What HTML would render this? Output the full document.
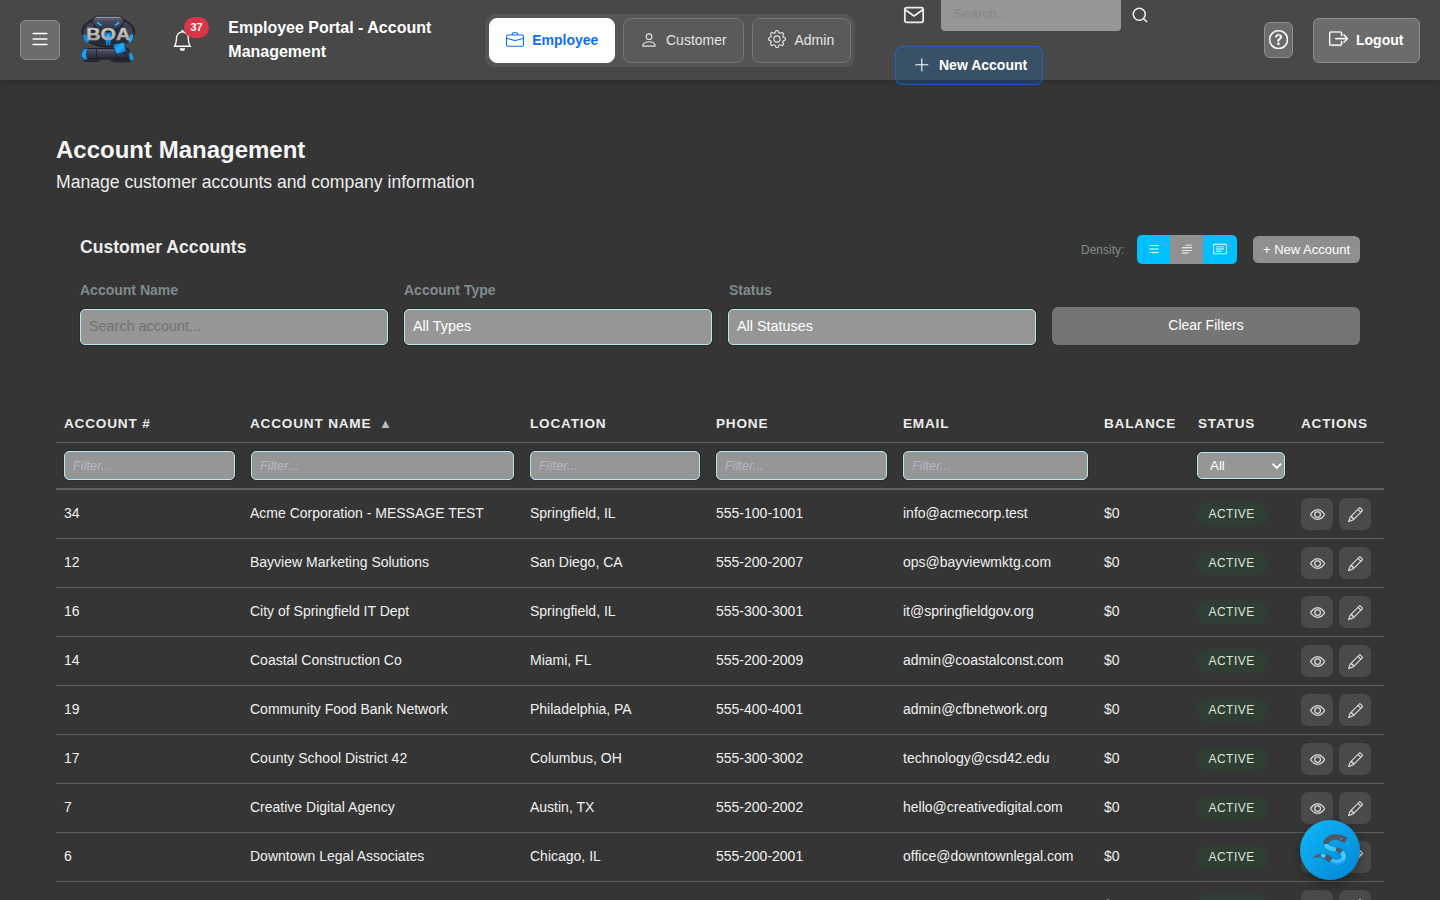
<!DOCTYPE html>
<html lang="en">
<head>
<meta charset="utf-8">
<title>Employee Portal - Account Management</title>
<style>
*{box-sizing:border-box;margin:0;padding:0}
html,body{width:1440px;height:900px;overflow:hidden;background:#353535;font-family:"Liberation Sans",Arial,sans-serif;color:#fff}
body{position:relative}
svg{display:block}
#hdr{position:absolute;left:0;top:0;width:1440px;height:80px;background:#484848;box-shadow:0 1px 5px rgba(0,0,0,.22)}
.hbtn{position:absolute;background:#6c6c6c;border:1px solid #8e8e8e;border-radius:6px;color:#fff}
#menu{left:20px;top:20px;width:40px;height:40px}
#title{position:absolute;left:228.3px;top:16px;width:240px;font-size:16px;line-height:24px;font-weight:bold;color:#fff}
#switch{position:absolute;left:485px;top:14px;width:370px;height:53px;background:#555;border-radius:10px}
.sw{position:absolute;top:4px;height:45px;border-radius:8px;font-size:14px;line-height:16px;color:#e4e4e4;background:#5a5a5a;border:1px solid #767676}
.sw span{position:absolute;top:13px;white-space:nowrap}
.sw.on{background:#fff;border-color:#fff;color:#0d6efd;font-weight:bold}
#srch{position:absolute;left:941px;top:-4px;width:180px;height:35px;background:#969696;border-radius:4px;font-size:13.6px;color:#87878c;padding:10.3px 12px 0 12.5px;line-height:16px}
#newacc{position:absolute;left:895px;top:46px;width:148px;height:39px;border:1px solid rgba(13,110,253,.6);border-radius:7px;background:rgba(0,120,230,.2);font-size:14px;font-weight:bold;line-height:16px;color:#fff}
#newacc span{position:absolute;left:43px;top:10px;white-space:nowrap}
#help{left:1264px;top:22px;width:29px;height:36px}
#logout{left:1313px;top:18px;width:107px;height:45px;font-size:14px;font-weight:bold;line-height:16px}
#logout span{position:absolute;left:42px;top:13px}
#badge{position:absolute;left:184px;top:17px;width:25px;height:21px;border-radius:10.5px;background:#dc3545;font-size:11px;font-weight:bold;line-height:20px;text-align:center;color:#fff}
h1{position:absolute;left:56px;top:134px;font-size:24px;line-height:32px;font-weight:bold;color:#f6f6f6;white-space:nowrap}
#sub{position:absolute;left:56px;top:170px;font-size:17.6px;line-height:24px;color:#ececec;white-space:nowrap}
h2{position:absolute;left:80px;top:235px;font-size:17.6px;line-height:24px;font-weight:bold;color:#ececec;white-space:nowrap}
#dens{position:absolute;left:1081px;top:243px;font-size:12px;line-height:14px;color:#7f8c8d}
#dgrp{position:absolute;left:1137px;top:235px;width:100px;height:29px;border-radius:5px;overflow:hidden;background:#00bfff}
#dgrp i{position:absolute;top:0;height:29px;display:block}
#na2{position:absolute;left:1253px;top:236px;width:107px;height:27px;border-radius:5.5px;background:#8f8f8f;font-size:13px;line-height:27px;text-align:center;color:#fff}
.lbl{position:absolute;top:282px;font-size:14px;line-height:16px;font-weight:bold;color:#7f8c8d}
.inp{position:absolute;top:309px;height:36px;width:308px;background:#969696;border:1px solid #b6ecf1;border-radius:5px;font-size:14.4px;line-height:32px;padding-left:8px;color:#fff;box-shadow:0 0 0 1px rgba(30,20,20,.35)}
#clr{position:absolute;left:1052px;top:307px;width:308px;height:38px;background:#757575;border-radius:6px;font-size:14px;line-height:36px;text-align:center;color:#fff}
.th{position:absolute;top:415.7px;font-size:13.6px;line-height:15px;font-weight:bold;letter-spacing:.8px;color:#ececec;white-space:nowrap}
.hl{position:absolute;left:56px;width:1328px;background:#5e5e5e}
.f{position:absolute;top:451px;height:28.5px;background:#969696;border:1px solid #b6ecf1;border-radius:5px;font-size:12.8px;font-style:italic;line-height:27px;padding-left:8px;color:#b2bac6;box-shadow:0 0 0 1px rgba(30,20,20,.35)}
.row{position:absolute;left:56px;width:1328px;height:49px;border-bottom:1px solid #5c5c5c;font-size:14px;line-height:46px;color:#f0f0f0;white-space:nowrap}
.row span{position:absolute;top:0}
.row .st{left:1141px;top:12px;width:70px;height:23.6px;border-radius:12px;background:#2f3e33;color:#d9e6da;font-size:12px;letter-spacing:.5px;line-height:25px;text-align:center;padding-right:.8px}
.row .ab{top:8px;width:32px;height:32px;border-radius:7px;background:#4a4a4a}
#fab{position:absolute;left:1300px;top:820px;width:60px;height:60px;border-radius:30px;background:linear-gradient(135deg,#10b8f8,#0284d4);box-shadow:0 4px 12px rgba(0,0,0,.35)}
</style>
</head>
<body>
<div id="hdr"></div>
<div class="hbtn" id="menu"><svg viewBox="0 0 16 16" width="22" height="22" fill="#fff" style="position:absolute;left:8px;top:7px"><path fill-rule="evenodd" d="M2.500 12a.5.5 0 0 1 .5-.5h10a.5.5 0 0 1 0 1H3a.5.5 0 0 1-.5-.5m0-4a.5.5 0 0 1 .5-.5h10a.5.5 0 0 1 0 1H3a.5.5 0 0 1-.5-.5m0-4a.5.5 0 0 1 .5-.5h10a.5.5 0 0 1 0 1H3a.5.5 0 0 1-.5-.5"/></svg></div>
<svg id="logo" viewBox="0 0 60 54" width="60" height="54" style="position:absolute;left:78px;top:12px">
<defs>
<linearGradient id="lgS" x1="0" y1="0" x2="0" y2="1"><stop offset="0" stop-color="#dddcd8"/><stop offset=".55" stop-color="#bcbab6"/><stop offset="1" stop-color="#8e8c89"/></linearGradient>
<linearGradient id="lgB" x1="0" y1="0" x2="1" y2="1"><stop offset="0" stop-color="#0b6fd0"/><stop offset=".5" stop-color="#22b0ff"/><stop offset="1" stop-color="#0a63c0"/></linearGradient>
<linearGradient id="lgD" x1="0" y1="0" x2="0" y2="1"><stop offset="0" stop-color="#555869"/><stop offset=".5" stop-color="#3a3d4b"/><stop offset="1" stop-color="#23252f"/></linearGradient>
<linearGradient id="lgH" x1="0" y1="0" x2="0" y2="1"><stop offset="0" stop-color="#6b6e7d"/><stop offset=".35" stop-color="#444757"/><stop offset="1" stop-color="#2a2c38"/></linearGradient>
</defs>
<ellipse cx="14" cy="48.600" rx="8.500" ry="1.700" fill="#1e2029" opacity=".85"/>
<ellipse cx="43" cy="48.800" rx="11" ry="1.700" fill="#1e2029" opacity=".85"/>
<ellipse cx="30.200" cy="19.800" rx="26.300" ry="15.300" fill="#2a2c38" stroke="#171820" stroke-width="1"/>
<path d="M6 24c-1.500-7 3-13 10-15.500l3 4c-5 2-8 6-7.500 11.500z" fill="#3e4151"/>
<path d="M54.500 24c1.500-7-3-13-10-15.500l-3 4c5 2 8 6 7.500 11.500z" fill="#3e4151"/>
<path d="M4.800 22.500l4 .5c.3 3 1.200 4.800 2.500 6.300l-3 1.600c-2-2.200-3.200-5-3.500-8.400z" fill="#1589e6"/>
<path d="M55.500 22l-3.600 1c-.2 2.800-.9 4.600-2 6.300l2.800 1.200c1.700-2.300 2.600-5 2.800-8.500z" fill="#19a4f4"/>
<path d="M17.200 4.300h25.600l3.700 5.200-5.500 7.300-10.800 3.200-10.800-3.200-5.500-7.300z" fill="url(#lgH)" stroke="#191a22" stroke-width=".9" stroke-linejoin="round"/>
<path d="M18.500 5.400h23" stroke="#8d90a0" stroke-width="1.100" stroke-linecap="round"/>
<path d="M19.600 9.400l4.600 3.600-1.600 1-3.800-2.700z" fill="#23b4ff"/>
<path d="M40.800 9.400l-4.600 3.600 1.600 1 3.800-2.700z" fill="#23b4ff"/>
<path d="M14 15c4 4 9 6 16.200 6s12.200-2 16.200-6l1 4c-3 6-9 12-17.200 12S16 25 13 19z" fill="#262833"/>
<path d="M27.200 20.500h6v6.500l-1.200 6.500h-1l-.8-4-.8 4h-1l-1.200-6.500z" fill="#0d84e6"/>
<path d="M28.600 22.500h3.200v3.500h-3.200z" fill="#35b8ff"/>
<text x="30.200" y="28.200" text-anchor="middle" font-family="Liberation Sans, Arial, sans-serif" font-weight="bold" font-size="16.800" textLength="44" lengthAdjust="spacingAndGlyphs" fill="url(#lgS)" stroke="#a9a7a3" stroke-width=".55">BOA</text>
<path d="M9 36.500h40c3.500 0 3.500 10.500 0 10.500H9c-5 0-5-10.500 0-10.500z" fill="url(#lgD)" stroke="#191a22" stroke-width=".9"/>
<path d="M9 36.500c-5 0-7 4.500-4.500 9.500l4 2.300 1.500-1.300c-2.500-3-2.500-7 0-10.500z" fill="url(#lgB)" stroke="#0d2a4a" stroke-width=".5"/>
<path d="M18.500 36.800v10M38 36.800v10" stroke="#1c1d26" stroke-width=".9"/>
<path d="M19 38.300h18.500" stroke="#5e6172" stroke-width="1.200" opacity=".8"/>
<path d="M44 33c4 2 8 6 11.500 13.500l-4.500 1.700c-3-6-6-9-10.500-11z" fill="#30323f" stroke="#191a22" stroke-width=".8"/>
<path d="M34.800 32.600l11.200-2.400 2.200 9.200-9.600 2.800z" fill="url(#lgB)" stroke="#0d2a4a" stroke-width=".5"/>
<path d="M50.800 40.600l3.400 1.200 1.600 5.800-3.600.8z" fill="#1b9cf0"/>
</svg>

<svg viewBox="0 0 16 16" width="20.8" height="20.8" fill="#fff" style="position:absolute;left:172.1px;top:29.6px;overflow:visible"><path d="M8 16a2 2 0 0 0 2-2H6a2 2 0 0 0 2 2M8 1.918l-.797.161A4 4 0 0 0 4 6c0 .628-.134 2.197-.459 3.742-.16.767-.376 1.566-.663 2.258h10.244c-.287-.692-.502-1.490-.663-2.258C12.134 8.197 12 6.628 12 6a4 4 0 0 0-3.203-3.920zM14.220 12c.223.447.481.801.780 1H1c.299-.199.557-.553.780-1C2.680 10.200 3 6.880 3 6c0-2.420 1.720-4.440 4.005-4.901a1 1 0 1 1 1.990 0A5 5 0 0 1 13 6c0 .880.320 4.200 1.220 6"/></svg>
<div id="badge">37</div>
<div id="title">Employee Portal - Account Management</div>
<div id="switch">
 <div class="sw on" style="left:4px;width:126px"><svg viewBox="0 0 16 16" width="18" height="18" fill="#0d6efd" style="position:absolute;left:16px;top:12px"><path d="M6.500 1A1.500 1.500 0 0 0 5 2.500V3H1.500A1.500 1.500 0 0 0 0 4.500v8A1.500 1.500 0 0 0 1.500 14h13a1.500 1.500 0 0 0 1.500-1.500v-8A1.500 1.500 0 0 0 14.500 3H11v-.5A1.500 1.500 0 0 0 9.500 1zm0 1h3a.5.5 0 0 1 .5.500V3H6v-.5a.5.5 0 0 1 .5-.5m1.886 6.914L15 7.151V12.500a.5.5 0 0 1-.5.500h-13a.5.5 0 0 1-.5-.5V7.150l6.614 1.764a1.500 1.500 0 0 0 .772 0M1.500 4h13a.5.5 0 0 1 .5.500v1.616L8.129 7.948a.5.5 0 0 1-.258 0L1 6.116V4.500a.5.5 0 0 1 .5-.5"/></svg><span style="left:42.2px">Employee</span></div>
 <div class="sw" style="left:138px;width:121px"><svg viewBox="0 0 16 16" width="18" height="18" fill="#e4e4e4" style="position:absolute;left:16px;top:12px"><path d="M8 8a3 3 0 1 0 0-6 3 3 0 0 0 0 6m2-3a2 2 0 1 1-4 0 2 2 0 0 1 4 0m4 8c0 1-1 1-1 1H3s-1 0-1-1 1-4 6-4 6 3 6 4m-1-.004c-.001-.246-.154-.986-.832-1.664C11.516 10.680 10.289 10 8 10s-3.516.680-4.168 1.332c-.678.678-.830 1.418-.832 1.664z"/></svg><span style="left:42px">Customer</span></div>
 <div class="sw" style="left:267px;width:99px"><svg viewBox="0 0 16 16" width="18" height="18" fill="#e4e4e4" style="position:absolute;left:15.1px;top:11.1px"><path d="M8 4.754a3.246 3.246 0 1 0 0 6.492 3.246 3.246 0 0 0 0-6.492M5.754 8a2.246 2.246 0 1 1 4.492 0 2.246 2.246 0 0 1-4.492 0"/><path d="M9.796 1.343c-.527-1.790-3.065-1.790-3.592 0l-.094.319a.873.873 0 0 1-1.255.520l-.292-.160c-1.640-.892-3.433.902-2.540 2.541l.159.292a.873.873 0 0 1-.520 1.255l-.319.094c-1.790.527-1.790 3.065 0 3.592l.319.094a.873.873 0 0 1 .520 1.255l-.160.292c-.892 1.640.901 3.434 2.541 2.540l.292-.159a.873.873 0 0 1 1.255.520l.094.319c.527 1.790 3.065 1.790 3.592 0l.094-.319a.873.873 0 0 1 1.255-.520l.292.160c1.640.893 3.434-.902 2.540-2.541l-.159-.292a.873.873 0 0 1 .520-1.255l.319-.094c1.790-.527 1.790-3.065 0-3.592l-.319-.094a.873.873 0 0 1-.520-1.255l.160-.292c.893-1.640-.902-3.433-2.541-2.540l-.292.159a.873.873 0 0 1-1.255-.520zm-2.633.283c.246-.835 1.428-.835 1.674 0l.094.319a1.873 1.873 0 0 0 2.693 1.115l.291-.160c.764-.415 1.600.420 1.184 1.185l-.159.292a1.873 1.873 0 0 0 1.116 2.692l.318.094c.835.246.835 1.428 0 1.674l-.319.094a1.873 1.873 0 0 0-1.115 2.693l.160.291c.415.764-.420 1.600-1.185 1.184l-.291-.159a1.873 1.873 0 0 0-2.693 1.116l-.094.318c-.246.835-1.428.835-1.674 0l-.094-.319a1.873 1.873 0 0 0-2.692-1.115l-.292.160c-.764.415-1.600-.420-1.184-1.185l.159-.291A1.873 1.873 0 0 0 1.945 8.930l-.319-.094c-.835-.246-.835-1.428 0-1.674l.319-.094A1.873 1.873 0 0 0 3.060 4.377l-.160-.292c-.415-.764.420-1.600 1.185-1.184l.292.159a1.873 1.873 0 0 0 2.692-1.115z"/></svg><span style="left:41.5px">Admin</span></div>
</div>
<svg viewBox="0 0 24 24" width="22" height="22" fill="none" stroke="#eeeeee" stroke-width="1.9" stroke-linecap="round" stroke-linejoin="round" style="position:absolute;left:903px;top:4px"><path d="M4 4h16c1.100 0 2 .9 2 2v12c0 1.100-.9 2-2 2H4c-1.100 0-2-.9-2-2V6c0-1.100.9-2 2-2z"/><polyline points="22,6 12,13 2,6"/></svg>
<svg viewBox="0 0 24 24" width="18" height="18" fill="none" stroke="#efefef" stroke-width="2" stroke-linecap="round" stroke-linejoin="round" style="position:absolute;left:1131px;top:6px"><circle cx="11" cy="11" r="8"/><line x1="21" y1="21" x2="16.650" y2="16.650"/></svg>
<div id="srch">Search...</div>
<div id="newacc"><svg viewBox="0 0 16 16" width="17.6" height="17.6" fill="#fff" style="position:absolute;left:17.1px;top:9px"><path fill-rule="evenodd" d="M8 2a.5.5 0 0 1 .5.500v5h5a.5.5 0 0 1 0 1h-5v5a.5.5 0 0 1-1 0v-5h-5a.5.5 0 0 1 0-1h5v-5A.5.500 0 0 1 8 2"/></svg><span>New Account</span></div>
<div class="hbtn" id="help"><svg viewBox="0 0 16 16" width="19.2" height="19.2" fill="#fff" style="position:absolute;left:3.9px;top:6.9px;stroke:#fff;stroke-width:.35px"><path d="M8 15A7 7 0 1 1 8 1a7 7 0 0 1 0 14m0 1A8 8 0 1 0 8 0a8 8 0 0 0 0 16"/><path d="M5.255 5.786a.237.237 0 0 0 .241.247h.825c.138 0 .248-.113.266-.250.090-.656.540-1.134 1.342-1.134.686 0 1.314.343 1.314 1.168 0 .635-.374.927-.965 1.371-.673.489-1.206 1.060-1.168 1.987l.003.217a.25.250 0 0 0 .25.246h.811a.25.250 0 0 0 .25-.25v-.105c0-.718.273-.927 1.010-1.486.609-.463 1.244-.977 1.244-2.056 0-1.511-1.276-2.241-2.673-2.241-1.267 0-2.655.590-2.750 2.286m1.557 5.763c0 .533.425.927 1.010.927.609 0 1.028-.394 1.028-.927 0-.552-.420-.940-1.029-.940-.584 0-1.009.388-1.009.940"/></svg></div>
<div class="hbtn" id="logout"><svg viewBox="0 0 16 16" width="19.2" height="19.2" fill="#fff" style="position:absolute;left:15px;top:10.3px;stroke:#fff;stroke-width:.25px"><path fill-rule="evenodd" d="M10 12.500a.5.5 0 0 1-.5.500h-8a.5.5 0 0 1-.5-.5v-9a.5.5 0 0 1 .5-.5h8a.5.5 0 0 1 .5.500v2a.5.5 0 0 0 1 0v-2A1.500 1.500 0 0 0 9.500 2h-8A1.500 1.500 0 0 0 0 3.500v9A1.500 1.500 0 0 0 1.500 14h8a1.500 1.500 0 0 0 1.500-1.500v-2a.5.5 0 0 0-1 0z"/><path fill-rule="evenodd" d="M15.854 8.354a.5.5 0 0 0 0-.708l-3-3a.5.5 0 0 0-.708.708L14.293 7.500H5.500a.5.5 0 0 0 0 1h8.793l-2.147 2.146a.5.5 0 0 0 .708.708z"/></svg><span>Logout</span></div>

<h1>Account Management</h1>
<div id="sub">Manage customer accounts and company information</div>
<h2>Customer Accounts</h2>
<div id="dens">Density:</div>
<div id="dgrp"><i style="left:33px;width:33px;background:#909090"></i><svg viewBox="0 0 16 16" width="14" height="14" fill="#fff" style="position:absolute;left:10.2px;top:7px"><path fill-rule="evenodd" d="M2.500 12a.5.5 0 0 1 .5-.5h10a.5.5 0 0 1 0 1H3a.5.5 0 0 1-.5-.5m0-4a.5.5 0 0 1 .5-.5h10a.5.5 0 0 1 0 1H3a.5.5 0 0 1-.5-.5m0-4a.5.5 0 0 1 .5-.5h10a.5.5 0 0 1 0 1H3a.5.5 0 0 1-.5-.5"/></svg><svg viewBox="0 0 16 16" width="14" height="14" fill="#fff" style="position:absolute;left:43.1px;top:7px"><path fill-rule="evenodd" d="M2 12.500a.5.5 0 0 1 .5-.5h7a.5.5 0 0 1 0 1h-7a.5.5 0 0 1-.5-.5m0-3a.5.5 0 0 1 .5-.5h11a.5.5 0 0 1 0 1h-11a.5.5 0 0 1-.5-.5m0-3a.5.5 0 0 1 .5-.5h11a.5.5 0 0 1 0 1h-11a.5.5 0 0 1-.5-.5m4-3a.5.5 0 0 1 .5-.5h7a.5.5 0 0 1 0 1h-7a.5.5 0 0 1-.5-.5"/></svg><svg viewBox="0 0 16 16" width="14" height="14" fill="#fff" style="position:absolute;left:76.2px;top:7px"><path d="M14.500 3a.5.5 0 0 1 .5.500v9a.5.5 0 0 1-.5.500h-13a.5.5 0 0 1-.5-.5v-9a.5.5 0 0 1 .5-.5zm-13-1A1.500 1.500 0 0 0 0 3.500v9A1.500 1.500 0 0 0 1.500 14h13a1.500 1.500 0 0 0 1.500-1.500v-9A1.500 1.500 0 0 0 14.500 2z"/><path d="M3 5.500a.5.5 0 0 1 .5-.5h9a.5.5 0 0 1 0 1h-9a.5.5 0 0 1-.5-.5M3 8a.5.5 0 0 1 .5-.5h9a.5.5 0 0 1 0 1h-9A.5.500 0 0 1 3 8m0 2.500a.5.5 0 0 1 .5-.5h6a.5.5 0 0 1 0 1h-6a.5.5 0 0 1-.5-.5"/></svg></div>
<div id="na2">+ New Account</div>
<div class="lbl" style="left:80px">Account Name</div>
<div class="lbl" style="left:404px">Account Type</div>
<div class="lbl" style="left:729px">Status</div>
<div class="inp" style="left:80px;color:#717171">Search account...</div>
<div class="inp" style="left:404px">All Types</div>
<div class="inp" style="left:728px">All Statuses</div>
<div id="clr">Clear Filters</div>

<div class="th" style="left:64px">ACCOUNT #</div>
<div class="th" style="left:250px">ACCOUNT NAME<span style="position:absolute;left:129px;top:0;font-size:13px;letter-spacing:0;color:#bdbdbd">&#9650;</span></div>
<div class="th" style="left:530px">LOCATION</div>
<div class="th" style="left:716px">PHONE</div>
<div class="th" style="left:903px">EMAIL</div>
<div class="th" style="left:1104px">BALANCE</div>
<div class="th" style="left:1198px">STATUS</div>
<div class="th" style="left:1301px">ACTIONS</div>
<div class="hl" style="top:442px;height:1px"></div>
<div class="f" style="left:64px;width:171px">Filter...</div>
<div class="f" style="left:251px;width:263px">Filter...</div>
<div class="f" style="left:530px;width:170px">Filter...</div>
<div class="f" style="left:716px;width:171px">Filter...</div>
<div class="f" style="left:903px;width:185px">Filter...</div>
<div class="f" id="fsel" style="left:1197px;width:88px;top:452px;height:27px;font-style:normal;color:#fff;font-size:13.33px;line-height:26.5px;padding-left:12px">All<svg viewBox="0 0 12 8" width="12" height="8" style="position:absolute;left:72.5px;top:8.600px" fill="none" stroke="#fff" stroke-width="1.900"><path d="M1.500 1.700l4.300 4.300 4.300-4.300"/></svg></div>
<div class="hl" style="top:488px;height:2px"></div>
<div id="rows">
<div class="row" style="top:490px"><span style="left:8px">34</span><span style="left:194px">Acme Corporation - MESSAGE TEST</span><span style="left:474px">Springfield, IL</span><span style="left:660px">555-100-1001</span><span style="left:847px">info@acmecorp.test</span><span style="left:1048px">$0</span><span class="st">ACTIVE</span><span class="ab" style="left:1245px"><svg viewBox="0 0 16 16" width="15.2" height="15.2" fill="#e4e4e4" style="position:absolute;left:8.8px;top:8.8px;stroke:#e4e4e4;stroke-width:.25px"><path d="M16 8s-3-5.500-8-5.500S0 8 0 8s3 5.500 8 5.500S16 8 16 8M1.173 8a13 13 0 0 1 1.660-2.043C4.120 4.668 5.880 3.500 8 3.500s3.879 1.168 5.168 2.457A13 13 0 0 1 14.828 8q-.086.130-.195.288c-.335.480-.830 1.120-1.465 1.755C11.879 11.332 10.119 12.500 8 12.500s-3.879-1.168-5.168-2.457A13 13 0 0 1 1.172 8z"/><path d="M8 5.500a2.500 2.500 0 1 0 0 5 2.500 2.500 0 0 0 0-5M4.500 8a3.500 3.500 0 1 1 7 0 3.500 3.500 0 0 1-7 0"/></svg></span><span class="ab" style="left:1283px"><svg viewBox="0 0 16 16" width="15.2" height="15.2" fill="#e4e4e4" style="position:absolute;left:9.3px;top:8.6px;stroke:#e4e4e4;stroke-width:.2px"><path d="M12.146.146a.5.5 0 0 1 .708 0l3 3a.5.5 0 0 1 0 .708l-10 10a.5.5 0 0 1-.168.110l-5 2a.5.5 0 0 1-.650-.650l2-5a.5.5 0 0 1 .110-.168zM11.207 2.500 13.500 4.793 14.793 3.500 12.500 1.207zm1.586 3L10.500 3.207 4 9.707V10h.5a.5.5 0 0 1 .5.500v.5h.5a.5.5 0 0 1 .5.500v.5h.293zm-9.761 5.175-.106.106-1.528 3.821 3.821-1.528.106-.106A.5.500 0 0 1 5 12.500V12h-.5a.5.5 0 0 1-.5-.5V11h-.5a.5.5 0 0 1-.468-.325"/></svg></span></div>
<div class="row" style="top:539px"><span style="left:8px">12</span><span style="left:194px">Bayview Marketing Solutions</span><span style="left:474px">San Diego, CA</span><span style="left:660px">555-200-2007</span><span style="left:847px">ops@bayviewmktg.com</span><span style="left:1048px">$0</span><span class="st">ACTIVE</span><span class="ab" style="left:1245px"><svg viewBox="0 0 16 16" width="15.2" height="15.2" fill="#e4e4e4" style="position:absolute;left:8.8px;top:8.8px;stroke:#e4e4e4;stroke-width:.25px"><path d="M16 8s-3-5.500-8-5.500S0 8 0 8s3 5.500 8 5.500S16 8 16 8M1.173 8a13 13 0 0 1 1.660-2.043C4.120 4.668 5.880 3.500 8 3.500s3.879 1.168 5.168 2.457A13 13 0 0 1 14.828 8q-.086.130-.195.288c-.335.480-.830 1.120-1.465 1.755C11.879 11.332 10.119 12.500 8 12.500s-3.879-1.168-5.168-2.457A13 13 0 0 1 1.172 8z"/><path d="M8 5.500a2.500 2.500 0 1 0 0 5 2.500 2.500 0 0 0 0-5M4.500 8a3.500 3.500 0 1 1 7 0 3.500 3.500 0 0 1-7 0"/></svg></span><span class="ab" style="left:1283px"><svg viewBox="0 0 16 16" width="15.2" height="15.2" fill="#e4e4e4" style="position:absolute;left:9.3px;top:8.6px;stroke:#e4e4e4;stroke-width:.2px"><path d="M12.146.146a.5.5 0 0 1 .708 0l3 3a.5.5 0 0 1 0 .708l-10 10a.5.5 0 0 1-.168.110l-5 2a.5.5 0 0 1-.650-.650l2-5a.5.5 0 0 1 .110-.168zM11.207 2.500 13.500 4.793 14.793 3.500 12.500 1.207zm1.586 3L10.500 3.207 4 9.707V10h.5a.5.5 0 0 1 .5.500v.5h.5a.5.5 0 0 1 .5.500v.5h.293zm-9.761 5.175-.106.106-1.528 3.821 3.821-1.528.106-.106A.5.500 0 0 1 5 12.500V12h-.5a.5.5 0 0 1-.5-.5V11h-.5a.5.5 0 0 1-.468-.325"/></svg></span></div>
<div class="row" style="top:588px"><span style="left:8px">16</span><span style="left:194px">City of Springfield IT Dept</span><span style="left:474px">Springfield, IL</span><span style="left:660px">555-300-3001</span><span style="left:847px">it@springfieldgov.org</span><span style="left:1048px">$0</span><span class="st">ACTIVE</span><span class="ab" style="left:1245px"><svg viewBox="0 0 16 16" width="15.2" height="15.2" fill="#e4e4e4" style="position:absolute;left:8.8px;top:8.8px;stroke:#e4e4e4;stroke-width:.25px"><path d="M16 8s-3-5.500-8-5.500S0 8 0 8s3 5.500 8 5.500S16 8 16 8M1.173 8a13 13 0 0 1 1.660-2.043C4.120 4.668 5.880 3.500 8 3.500s3.879 1.168 5.168 2.457A13 13 0 0 1 14.828 8q-.086.130-.195.288c-.335.480-.830 1.120-1.465 1.755C11.879 11.332 10.119 12.500 8 12.500s-3.879-1.168-5.168-2.457A13 13 0 0 1 1.172 8z"/><path d="M8 5.500a2.500 2.500 0 1 0 0 5 2.500 2.500 0 0 0 0-5M4.500 8a3.500 3.500 0 1 1 7 0 3.500 3.500 0 0 1-7 0"/></svg></span><span class="ab" style="left:1283px"><svg viewBox="0 0 16 16" width="15.2" height="15.2" fill="#e4e4e4" style="position:absolute;left:9.3px;top:8.6px;stroke:#e4e4e4;stroke-width:.2px"><path d="M12.146.146a.5.5 0 0 1 .708 0l3 3a.5.5 0 0 1 0 .708l-10 10a.5.5 0 0 1-.168.110l-5 2a.5.5 0 0 1-.650-.650l2-5a.5.5 0 0 1 .110-.168zM11.207 2.500 13.500 4.793 14.793 3.500 12.500 1.207zm1.586 3L10.500 3.207 4 9.707V10h.5a.5.5 0 0 1 .5.500v.5h.5a.5.5 0 0 1 .5.500v.5h.293zm-9.761 5.175-.106.106-1.528 3.821 3.821-1.528.106-.106A.5.500 0 0 1 5 12.500V12h-.5a.5.5 0 0 1-.5-.5V11h-.5a.5.5 0 0 1-.468-.325"/></svg></span></div>
<div class="row" style="top:637px"><span style="left:8px">14</span><span style="left:194px">Coastal Construction Co</span><span style="left:474px">Miami, FL</span><span style="left:660px">555-200-2009</span><span style="left:847px">admin@coastalconst.com</span><span style="left:1048px">$0</span><span class="st">ACTIVE</span><span class="ab" style="left:1245px"><svg viewBox="0 0 16 16" width="15.2" height="15.2" fill="#e4e4e4" style="position:absolute;left:8.8px;top:8.8px;stroke:#e4e4e4;stroke-width:.25px"><path d="M16 8s-3-5.500-8-5.500S0 8 0 8s3 5.500 8 5.500S16 8 16 8M1.173 8a13 13 0 0 1 1.660-2.043C4.120 4.668 5.880 3.500 8 3.500s3.879 1.168 5.168 2.457A13 13 0 0 1 14.828 8q-.086.130-.195.288c-.335.480-.830 1.120-1.465 1.755C11.879 11.332 10.119 12.500 8 12.500s-3.879-1.168-5.168-2.457A13 13 0 0 1 1.172 8z"/><path d="M8 5.500a2.500 2.500 0 1 0 0 5 2.500 2.500 0 0 0 0-5M4.500 8a3.500 3.500 0 1 1 7 0 3.500 3.500 0 0 1-7 0"/></svg></span><span class="ab" style="left:1283px"><svg viewBox="0 0 16 16" width="15.2" height="15.2" fill="#e4e4e4" style="position:absolute;left:9.3px;top:8.6px;stroke:#e4e4e4;stroke-width:.2px"><path d="M12.146.146a.5.5 0 0 1 .708 0l3 3a.5.5 0 0 1 0 .708l-10 10a.5.5 0 0 1-.168.110l-5 2a.5.5 0 0 1-.650-.650l2-5a.5.5 0 0 1 .110-.168zM11.207 2.500 13.500 4.793 14.793 3.500 12.500 1.207zm1.586 3L10.500 3.207 4 9.707V10h.5a.5.5 0 0 1 .5.500v.5h.5a.5.5 0 0 1 .5.500v.5h.293zm-9.761 5.175-.106.106-1.528 3.821 3.821-1.528.106-.106A.5.500 0 0 1 5 12.500V12h-.5a.5.5 0 0 1-.5-.5V11h-.5a.5.5 0 0 1-.468-.325"/></svg></span></div>
<div class="row" style="top:686px"><span style="left:8px">19</span><span style="left:194px">Community Food Bank Network</span><span style="left:474px">Philadelphia, PA</span><span style="left:660px">555-400-4001</span><span style="left:847px">admin@cfbnetwork.org</span><span style="left:1048px">$0</span><span class="st">ACTIVE</span><span class="ab" style="left:1245px"><svg viewBox="0 0 16 16" width="15.2" height="15.2" fill="#e4e4e4" style="position:absolute;left:8.8px;top:8.8px;stroke:#e4e4e4;stroke-width:.25px"><path d="M16 8s-3-5.500-8-5.500S0 8 0 8s3 5.500 8 5.500S16 8 16 8M1.173 8a13 13 0 0 1 1.660-2.043C4.120 4.668 5.880 3.500 8 3.500s3.879 1.168 5.168 2.457A13 13 0 0 1 14.828 8q-.086.130-.195.288c-.335.480-.830 1.120-1.465 1.755C11.879 11.332 10.119 12.500 8 12.500s-3.879-1.168-5.168-2.457A13 13 0 0 1 1.172 8z"/><path d="M8 5.500a2.500 2.500 0 1 0 0 5 2.500 2.500 0 0 0 0-5M4.500 8a3.500 3.500 0 1 1 7 0 3.500 3.500 0 0 1-7 0"/></svg></span><span class="ab" style="left:1283px"><svg viewBox="0 0 16 16" width="15.2" height="15.2" fill="#e4e4e4" style="position:absolute;left:9.3px;top:8.6px;stroke:#e4e4e4;stroke-width:.2px"><path d="M12.146.146a.5.5 0 0 1 .708 0l3 3a.5.5 0 0 1 0 .708l-10 10a.5.5 0 0 1-.168.110l-5 2a.5.5 0 0 1-.650-.650l2-5a.5.5 0 0 1 .110-.168zM11.207 2.500 13.500 4.793 14.793 3.500 12.500 1.207zm1.586 3L10.500 3.207 4 9.707V10h.5a.5.5 0 0 1 .5.500v.5h.5a.5.5 0 0 1 .5.500v.5h.293zm-9.761 5.175-.106.106-1.528 3.821 3.821-1.528.106-.106A.5.500 0 0 1 5 12.500V12h-.5a.5.5 0 0 1-.5-.5V11h-.5a.5.5 0 0 1-.468-.325"/></svg></span></div>
<div class="row" style="top:735px"><span style="left:8px">17</span><span style="left:194px">County School District 42</span><span style="left:474px">Columbus, OH</span><span style="left:660px">555-300-3002</span><span style="left:847px">technology@csd42.edu</span><span style="left:1048px">$0</span><span class="st">ACTIVE</span><span class="ab" style="left:1245px"><svg viewBox="0 0 16 16" width="15.2" height="15.2" fill="#e4e4e4" style="position:absolute;left:8.8px;top:8.8px;stroke:#e4e4e4;stroke-width:.25px"><path d="M16 8s-3-5.500-8-5.500S0 8 0 8s3 5.500 8 5.500S16 8 16 8M1.173 8a13 13 0 0 1 1.660-2.043C4.120 4.668 5.880 3.500 8 3.500s3.879 1.168 5.168 2.457A13 13 0 0 1 14.828 8q-.086.130-.195.288c-.335.480-.830 1.120-1.465 1.755C11.879 11.332 10.119 12.500 8 12.500s-3.879-1.168-5.168-2.457A13 13 0 0 1 1.172 8z"/><path d="M8 5.500a2.500 2.500 0 1 0 0 5 2.500 2.500 0 0 0 0-5M4.500 8a3.500 3.500 0 1 1 7 0 3.500 3.500 0 0 1-7 0"/></svg></span><span class="ab" style="left:1283px"><svg viewBox="0 0 16 16" width="15.2" height="15.2" fill="#e4e4e4" style="position:absolute;left:9.3px;top:8.6px;stroke:#e4e4e4;stroke-width:.2px"><path d="M12.146.146a.5.5 0 0 1 .708 0l3 3a.5.5 0 0 1 0 .708l-10 10a.5.5 0 0 1-.168.110l-5 2a.5.5 0 0 1-.650-.650l2-5a.5.5 0 0 1 .110-.168zM11.207 2.500 13.500 4.793 14.793 3.500 12.500 1.207zm1.586 3L10.500 3.207 4 9.707V10h.5a.5.5 0 0 1 .5.500v.5h.5a.5.5 0 0 1 .5.500v.5h.293zm-9.761 5.175-.106.106-1.528 3.821 3.821-1.528.106-.106A.5.500 0 0 1 5 12.500V12h-.5a.5.5 0 0 1-.5-.5V11h-.5a.5.5 0 0 1-.468-.325"/></svg></span></div>
<div class="row" style="top:784px"><span style="left:8px">7</span><span style="left:194px">Creative Digital Agency</span><span style="left:474px">Austin, TX</span><span style="left:660px">555-200-2002</span><span style="left:847px">hello@creativedigital.com</span><span style="left:1048px">$0</span><span class="st">ACTIVE</span><span class="ab" style="left:1245px"><svg viewBox="0 0 16 16" width="15.2" height="15.2" fill="#e4e4e4" style="position:absolute;left:8.8px;top:8.8px;stroke:#e4e4e4;stroke-width:.25px"><path d="M16 8s-3-5.500-8-5.500S0 8 0 8s3 5.500 8 5.500S16 8 16 8M1.173 8a13 13 0 0 1 1.660-2.043C4.120 4.668 5.880 3.500 8 3.500s3.879 1.168 5.168 2.457A13 13 0 0 1 14.828 8q-.086.130-.195.288c-.335.480-.830 1.120-1.465 1.755C11.879 11.332 10.119 12.500 8 12.500s-3.879-1.168-5.168-2.457A13 13 0 0 1 1.172 8z"/><path d="M8 5.500a2.500 2.500 0 1 0 0 5 2.500 2.500 0 0 0 0-5M4.500 8a3.500 3.500 0 1 1 7 0 3.500 3.500 0 0 1-7 0"/></svg></span><span class="ab" style="left:1283px"><svg viewBox="0 0 16 16" width="15.2" height="15.2" fill="#e4e4e4" style="position:absolute;left:9.3px;top:8.6px;stroke:#e4e4e4;stroke-width:.2px"><path d="M12.146.146a.5.5 0 0 1 .708 0l3 3a.5.5 0 0 1 0 .708l-10 10a.5.5 0 0 1-.168.110l-5 2a.5.5 0 0 1-.650-.650l2-5a.5.5 0 0 1 .110-.168zM11.207 2.500 13.500 4.793 14.793 3.500 12.500 1.207zm1.586 3L10.500 3.207 4 9.707V10h.5a.5.5 0 0 1 .5.500v.5h.5a.5.5 0 0 1 .5.500v.5h.293zm-9.761 5.175-.106.106-1.528 3.821 3.821-1.528.106-.106A.5.500 0 0 1 5 12.500V12h-.5a.5.5 0 0 1-.5-.5V11h-.5a.5.5 0 0 1-.468-.325"/></svg></span></div>
<div class="row" style="top:833px"><span style="left:8px">6</span><span style="left:194px">Downtown Legal Associates</span><span style="left:474px">Chicago, IL</span><span style="left:660px">555-200-2001</span><span style="left:847px">office@downtownlegal.com</span><span style="left:1048px">$0</span><span class="st">ACTIVE</span><span class="ab" style="left:1245px"><svg viewBox="0 0 16 16" width="15.2" height="15.2" fill="#e4e4e4" style="position:absolute;left:8.8px;top:8.8px;stroke:#e4e4e4;stroke-width:.25px"><path d="M16 8s-3-5.500-8-5.500S0 8 0 8s3 5.500 8 5.500S16 8 16 8M1.173 8a13 13 0 0 1 1.660-2.043C4.120 4.668 5.880 3.500 8 3.500s3.879 1.168 5.168 2.457A13 13 0 0 1 14.828 8q-.086.130-.195.288c-.335.480-.830 1.120-1.465 1.755C11.879 11.332 10.119 12.500 8 12.500s-3.879-1.168-5.168-2.457A13 13 0 0 1 1.172 8z"/><path d="M8 5.500a2.500 2.500 0 1 0 0 5 2.500 2.500 0 0 0 0-5M4.500 8a3.500 3.500 0 1 1 7 0 3.500 3.500 0 0 1-7 0"/></svg></span><span class="ab" style="left:1283px"><svg viewBox="0 0 16 16" width="15.2" height="15.2" fill="#e4e4e4" style="position:absolute;left:9.3px;top:8.6px;stroke:#e4e4e4;stroke-width:.2px"><path d="M12.146.146a.5.5 0 0 1 .708 0l3 3a.5.5 0 0 1 0 .708l-10 10a.5.5 0 0 1-.168.110l-5 2a.5.5 0 0 1-.650-.650l2-5a.5.5 0 0 1 .110-.168zM11.207 2.500 13.500 4.793 14.793 3.500 12.500 1.207zm1.586 3L10.500 3.207 4 9.707V10h.5a.5.5 0 0 1 .5.500v.5h.5a.5.5 0 0 1 .5.500v.5h.293zm-9.761 5.175-.106.106-1.528 3.821 3.821-1.528.106-.106A.5.500 0 0 1 5 12.500V12h-.5a.5.5 0 0 1-.5-.5V11h-.5a.5.5 0 0 1-.468-.325"/></svg></span></div>
<div class="row" style="top:882px"><span style="left:8px"></span><span style="left:194px"></span><span style="left:474px"></span><span style="left:660px"></span><span style="left:847px"></span><span style="left:1048px">$0</span><span class="st">ACTIVE</span><span class="ab" style="left:1245px"><svg viewBox="0 0 16 16" width="15.2" height="15.2" fill="#e4e4e4" style="position:absolute;left:8.8px;top:8.8px;stroke:#e4e4e4;stroke-width:.25px"><path d="M16 8s-3-5.500-8-5.500S0 8 0 8s3 5.500 8 5.500S16 8 16 8M1.173 8a13 13 0 0 1 1.660-2.043C4.120 4.668 5.880 3.500 8 3.500s3.879 1.168 5.168 2.457A13 13 0 0 1 14.828 8q-.086.130-.195.288c-.335.480-.830 1.120-1.465 1.755C11.879 11.332 10.119 12.500 8 12.500s-3.879-1.168-5.168-2.457A13 13 0 0 1 1.172 8z"/><path d="M8 5.500a2.500 2.500 0 1 0 0 5 2.500 2.500 0 0 0 0-5M4.500 8a3.500 3.500 0 1 1 7 0 3.500 3.500 0 0 1-7 0"/></svg></span><span class="ab" style="left:1283px"><svg viewBox="0 0 16 16" width="15.2" height="15.2" fill="#e4e4e4" style="position:absolute;left:9.3px;top:8.6px;stroke:#e4e4e4;stroke-width:.2px"><path d="M12.146.146a.5.5 0 0 1 .708 0l3 3a.5.5 0 0 1 0 .708l-10 10a.5.5 0 0 1-.168.110l-5 2a.5.5 0 0 1-.650-.650l2-5a.5.5 0 0 1 .110-.168zM11.207 2.500 13.500 4.793 14.793 3.500 12.500 1.207zm1.586 3L10.500 3.207 4 9.707V10h.5a.5.5 0 0 1 .5.500v.5h.5a.5.5 0 0 1 .5.500v.5h.293zm-9.761 5.175-.106.106-1.528 3.821 3.821-1.528.106-.106A.5.500 0 0 1 5 12.500V12h-.5a.5.5 0 0 1-.5-.5V11h-.5a.5.5 0 0 1-.468-.325"/></svg></span></div>
</div>
<div id="fab"><svg viewBox="0 0 60 60" width="60" height="60" style="position:absolute;left:0;top:0" fill="none" stroke-linecap="butt" stroke-linejoin="round">
<path d="M45.800 20.300C42 17.600 38 16.900 35 17c-4.500.2-8.500 2.600-9 7.100.3 2 1.800 3.400 4 4.100l9 2.700c3.500 1.500 5.300 3.800 4.700 6.600-.8 3.500-4.200 5-7.700 4.700-3-.3-5-1.700-7-3.300l-3.400-2.300c-1.600-.8-3.300-1.200-5.100-1.100" stroke="#0a5a9a" stroke-opacity=".45" stroke-width="6.200"/>
<path d="M46.500 21.200l2.300 1.100-.6 1.200-2.600-1.200z" fill="#2fb9f5" stroke="none"/>
<path d="M45.800 20.300C42 17.600 38 16.900 35 17c-4.500.2-8.500 2.600-9 7.100" stroke="#54565f" stroke-width="4.800"/>
<path d="M46.600 21.200l-4.600-3.900-3 3.600 6 1.600z" fill="#54565f"/>
<path d="M40.300 17.700l2.300 1.300-1.700.5z" fill="#2fc0ff"/>
<path d="M26 24.100c.3 2 1.800 3.400 4 4.100l6 1.800" stroke="#3fcbff" stroke-width="4.600"/>
<path d="M36 30l3 .9 2.400 1.300" stroke="#54565f" stroke-width="4.800"/>
<path d="M35.200 30.800l2.800.9 1.800 1-.8 1.500-4.600-1.900z" fill="#0f8eea"/>
<path d="M41.400 32.200c2 1.500 2.800 3.300 2.300 5.300-.2.900-.6 1.600-1.100 2.300" stroke="#3fcbff" stroke-width="4.600"/>
<path d="M42.600 39.800c-1.600 1.900-4.200 2.600-6.600 2.400-2-.2-3.600-.9-5-1.900" stroke="#35c2ff" stroke-width="5.200"/>
<path d="M43.600 41.200c-2 2.200-5 3-7.800 2.800-2.200-.2-4-1-5.400-2" stroke="#1598f0" stroke-width="1.600"/>
<path d="M31 40.300l-2-1.400-3.400-2.300" stroke="#54565f" stroke-width="4.600"/>
<path d="M25.800 34.600c-1.600-.8-3.300-1.200-5.100-1.100l.4 3.600c1.200 0 2.300.3 3.400.9z" fill="#45ccff"/>
<path d="M20.800 33.500c-3.600.2-6.600 2.600-8.700 5.900 2.400-1.700 5.400-2.500 9-2.300z" fill="#54565f"/>
</svg>
</div>
</body>
</html>
